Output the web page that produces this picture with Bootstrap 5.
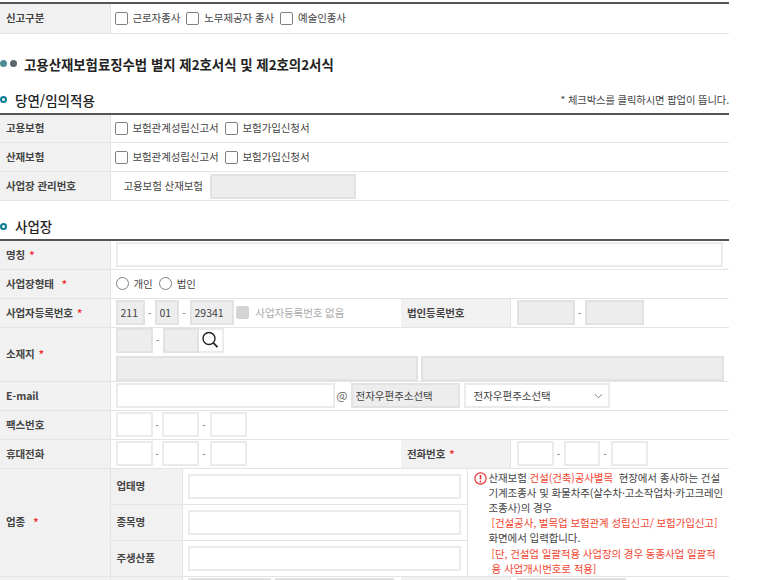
<!DOCTYPE html>
<html lang="ko">
<head>
<meta charset="utf-8">
<title>고용산재보험</title>
<link href="https://cdn.jsdelivr.net/npm/bootstrap@5.3.0/dist/css/bootstrap.min.css" rel="stylesheet">
<style>
html,body{height:580px;overflow:hidden;background:#fff}
body{font-family:"Noto Sans CJK KR","Noto Sans",sans-serif;font-size:10.5px;color:#444;letter-spacing:-.1px}
.pg{width:729px;padding-top:2px}
.ft{width:729px;table-layout:fixed;border-collapse:collapse;border-top:2px solid #555}
.ft td,.ft th{padding:0;border-bottom:1px solid #e4e4e4;vertical-align:middle;font-size:10.5px;font-weight:400;white-space:nowrap}
.ft th{background:#f1f1f1;padding-left:6px;font-weight:700;color:#444;border-right:1px solid #e4e4e4}
.c1{width:110px}.c2{width:72px}.c3{width:219px}.c4{width:66px}.c5{width:43px}.c6{width:219px}
.r29{height:29px}.r30{height:30px}.r36{height:36px}.r54{height:54px}
.ft td.cellcb{padding-left:4px}
.ft td.cellin{padding-left:5px}
.ft td.cellm{padding-left:5px;border-right:1px solid #e4e4e4}
.ft td.cellr{padding-left:6px}
.vbox{height:25px;border:2px solid #ebebeb;background:#fff;padding:0 3px;font-size:10.5px;color:#444;border-radius:0;outline:0;display:block;flex:none}
.vbox.off{background:#ededed;border-color:#e2e2e2}
.vbox.off:disabled{color:#444;opacity:1}
.w29{width:29px}.w24{width:24px}.w44{width:44px}.w37{width:37px}.w36{width:36px}.w58{width:58px}.w59{width:59px}.w25{width:25px}.w119{width:119px}.w146{width:146px}.w219{width:219px}.w302{width:302px}.w303{width:303px}.w607{width:607px}.w273{width:273px}.w109{width:109px}
.form-check-input.cb{width:13px;height:13px;margin:0;border:1px solid #808080;border-radius:2px;background-color:#fff;flex:none}
.form-check-input.cb.rd{border-radius:50%}
.form-check-input.cb.dis{background-color:#d4d4d4;border-color:#d4d4d4;opacity:1}
.cb+span{margin-left:5px}
span+.cb{margin-left:6px!important}
.rdg{margin-left:9px!important}
.dim{color:#aaa}
.form-check-input.cb.gap3l{margin-left:2px!important}
.cb+.dim{margin-left:4px}
.maint{font-size:13.4px;font-weight:700;color:#222;line-height:18px;margin:21px 0 0;padding:0;gap:7px;letter-spacing:0}
.dot{width:7px;height:7px;border-radius:50%;background:#4f8c94;flex:none}
.dot.gr{background:#59656b;margin-left:-4px}
.subt{font-size:13.5px;font-weight:500;color:#222;height:18px;line-height:18px;gap:8px;letter-spacing:0}
.sub1{margin-top:18px}
.sub2{margin-top:16px}
.ring{width:7px;height:7px;border-radius:50%;border:2px solid #0f7c96;flex:none}
.note{font-size:10.3px;color:#444;font-weight:400;letter-spacing:-.1px}
.tm5{margin-top:4px}
.tm2{margin-top:4px}
.req{color:#e33;margin-left:4px}
.req2{margin-left:8px}
.sep{width:10px;text-align:center;color:#777;flex:none}
.sp9{width:9px}.sp11{width:11px}
.sat{width:16px;padding-right:1px;font-size:11.5px;color:#666}
.mag{width:25px;height:25px;border:2px solid #ebebeb;border-left:0;flex:none}
.gapx{gap:3px}
.mgr{margin-left:13px;margin-right:7px}
.form-select.sel{width:146px;height:25px;padding:0 0 0 8px;margin-left:4px;font-size:10.5px;border:2px solid #ebebeb;border-radius:0;color:#444;background-image:url("data:image/svg+xml,%3csvg xmlns='http://www.w3.org/2000/svg' viewBox='0 0 10 6'%3e%3cpath fill='none' stroke='%23777' stroke-width='1' d='M1 1l4 4 4-4'/%3e%3c/svg%3e");background-size:9px 6px;background-position:right 5px center;box-shadow:none;flex:none}
.ft td.notice{padding-left:6px;line-height:15.2px;color:#444;vertical-align:top}
.nin{padding:1px 0 0 15px;position:relative}
.alert-ic{position:absolute;left:0;top:3px}
.rd-t{color:#f2452f}
.ind{padding-left:3px}
</style>
</head>
<body>
<div class="pg">
<table class="ft">
<colgroup><col class="c1"><col class="c2"><col class="c3"><col class="c4"><col class="c5"><col class="c6"></colgroup>
<tr class="r30"><th>신고구분</th><td colspan="5" class="cellcb">
  <div class="d-flex align-items-center"><input class="form-check-input cb" type="checkbox"><span>근로자종사</span><input class="form-check-input cb" type="checkbox"><span>노무제공자 종사</span><input class="form-check-input cb" type="checkbox"><span>예술인종사</span></div>
</td></tr>
</table>

<div class="d-flex align-items-center maint"><span class="dot"></span><span class="dot gr"></span><span>고용산재보험료징수법 별지 제2호서식 및 제2호의2서식</span></div>

<div class="d-flex align-items-center justify-content-between subt sub1"><div class="d-flex align-items-center subt"><span class="ring"></span><span>당연/임의적용</span></div><span class="note">* 체크박스를 클릭하시면 팝업이 뜹니다.</span></div>
<table class="ft tm5">
<colgroup><col class="c1"><col class="c2"><col class="c3"><col class="c4"><col class="c5"><col class="c6"></colgroup>
<tr class="r29"><th>고용보험</th><td colspan="5" class="cellcb"><div class="d-flex align-items-center"><input class="form-check-input cb" type="checkbox"><span>보험관계성립신고서</span><input class="form-check-input cb" type="checkbox"><span>보험가입신청서</span></div></td></tr>
<tr class="r29"><th>산재보험</th><td colspan="5" class="cellcb"><div class="d-flex align-items-center"><input class="form-check-input cb" type="checkbox"><span>보험관계성립신고서</span><input class="form-check-input cb" type="checkbox"><span>보험가입신청서</span></div></td></tr>
<tr class="r29"><th>사업장 관리번호</th><td colspan="5"><div class="d-flex align-items-center"><span class="mgr">고용보험 산재보험</span><input class="vbox off w146" disabled></div></td></tr>
</table>

<div class="d-flex align-items-center subt sub2"><span class="ring"></span><span>사업장</span></div>
<table class="ft tm2">
<colgroup><col class="c1"><col class="c2"><col class="c3"><col class="c4"><col class="c5"><col class="c6"></colgroup>
<tr class="r29"><th>명칭<span class="req">*</span></th><td colspan="5" class="cellin"><input class="vbox w607"></td></tr>
<tr class="r29"><th>사업장형태<span class="req req2">*</span></th><td colspan="5" class="cellin"><div class="d-flex align-items-center"><input class="form-check-input cb rd" type="radio" name="a"><span>개인</span><input class="form-check-input cb rd rdg" type="radio" name="a"><span>법인</span></div></td></tr>
<tr class="r29"><th>사업자등록번호<span class="req">*</span></th><td colspan="2" class="cellin"><div class="d-flex align-items-center"><input class="vbox off w29" disabled value="211"><span class="sep">-</span><input class="vbox off w24" disabled value="01"><span class="sep sp11">-</span><input class="vbox off w44" disabled value="29341"><input class="form-check-input cb dis gap3l" type="checkbox" disabled><span class="dim">&nbsp;사업자등록번호 없음</span></div></td><th colspan="2">법인등록번호</th><td class="cellr"><div class="d-flex align-items-center"><input class="vbox off w58" disabled><span class="sep">-</span><input class="vbox off w59" disabled></div></td></tr>
<tr class="r54"><th>소재지<span class="req">*</span></th><td colspan="5" class="cellin"><div class="d-flex flex-column gapx"><div class="d-flex align-items-center"><input class="vbox off w37" disabled><span class="sep">-</span><input class="vbox off w36" disabled><span class="mag d-flex align-items-center justify-content-center"><svg width="18" height="18" viewBox="0 0 18 18" fill="none" stroke="#222" stroke-width="1.4"><circle cx="8" cy="7.5" r="6"/><path d="M12.3 11.8l4.2 4.4" stroke-width="1.7"/></svg></span></div><div class="d-flex gapx"><input class="vbox off w302" disabled><input class="vbox off w303" disabled></div></div></td></tr>
<tr class="r29"><th>E-mail</th><td colspan="5" class="cellin"><div class="d-flex align-items-center"><input class="vbox w219"><span class="sep sat">@</span><input class="vbox off w109" disabled value="전자우편주소선택"><select class="form-select sel"><option>전자우편주소선택</option></select></div></td></tr>
<tr class="r29"><th>팩스번호</th><td colspan="5" class="cellin"><div class="d-flex align-items-center"><input class="vbox w37"><span class="sep sp9">-</span><input class="vbox w37"><span class="sep sp11">-</span><input class="vbox w37"></div></td></tr>
<tr class="r29"><th>휴대전화</th><td colspan="2" class="cellin"><div class="d-flex align-items-center"><input class="vbox w37"><span class="sep sp9">-</span><input class="vbox w37"><span class="sep sp11">-</span><input class="vbox w37"></div></td><th colspan="2">전화번호<span class="req">*</span></th><td class="cellr"><div class="d-flex align-items-center"><input class="vbox w37"><span class="sep">-</span><input class="vbox w36"><span class="sep sp11">-</span><input class="vbox w37"></div></td></tr>
<tr class="r36"><th rowspan="3">업종<span class="req req2">*</span></th><th>업태명</th><td colspan="2" class="cellm"><input class="vbox w273"></td><td colspan="2" rowspan="3" class="notice"><div class="nin"><svg class="alert-ic" width="13" height="13" viewBox="0 0 13 13" fill="none"><circle cx="6.5" cy="6.5" r="5.6" stroke="#e33" stroke-width="1.2"/><path d="M6.5 3v4.4" stroke="#e33" stroke-width="1.6"/><circle cx="6.5" cy="9.5" r=".9" fill="#e33"/></svg>산재보험 <span class="rd-t">건설(건축)공사별목</span>&nbsp; 현장에서 종사하는 건설<br>기계조종사 및 화물차주(살수차·고소작업차·카고크레인<br>조종사)의 경우<br><span class="rd-t ind">[건설공사, 벌목업 보험관계 성립신고/ 보험가입신고]</span><br>화면에서 입력합니다.<br><span class="rd-t ind">[단, 건설업 일괄적용 사업장의 경우 동종사업 일괄적</span><br><span class="rd-t ind">용 사업개시번호로 적용]</span></div></td></tr>
<tr class="r36"><th>종목명</th><td colspan="2" class="cellm"><input class="vbox w273"></td></tr>
<tr class="r36"><th>주생산품</th><td colspan="2" class="cellm"><input class="vbox w273"></td></tr>
<tr class="r29"><th></th><th></th><td class="cellin"><div class="d-flex align-items-center"><input class="vbox off w58" disabled><input class="vbox off w25" disabled><input class="vbox off w119 ms-1" disabled></div></td><th colspan="2"></th><td class="cellr"><input class="vbox off w109" disabled></td></tr>
</table>
</div>
</body>
</html>
